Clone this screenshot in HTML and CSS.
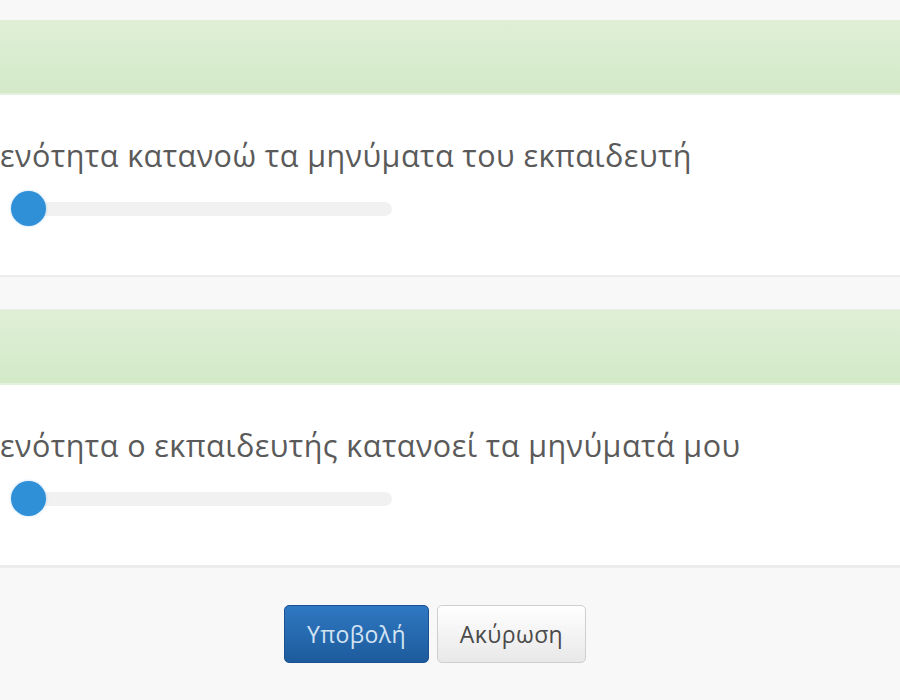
FILE: index.html
```html
<!DOCTYPE html>
<html lang="el">
<head>
<meta charset="utf-8">
<title>Αξιολόγηση</title>
<link rel="stylesheet" href="styles.css">
</head>
<body>
<div class="page">
  <section class="panel">
    <div class="panel-heading"></div>
    <div class="panel-body">
      <p class="question">ενότητα κατανοώ τα μηνύματα του εκπαιδευτή</p>
      <div class="slider">
        <div class="track"></div>
        <div class="thumb"></div>
      </div>
    </div>
  </section>
  <section class="panel panel-second">
    <div class="panel-heading"></div>
    <div class="panel-body">
      <p class="question">ενότητα ο εκπαιδευτής κατανοεί τα μηνύματά μου</p>
      <div class="slider">
        <div class="track"></div>
        <div class="thumb"></div>
      </div>
    </div>
  </section>
  <div class="form-actions">
    <button class="btn btn-primary" type="submit">Υποβολή</button>
    <button class="btn btn-default" type="button">Ακύρωση</button>
  </div>
</div>
</body>
</html>
```

FILE: styles.css
```css
html, body {
  margin: 0;
  padding: 0;
}
body {
  background: #f8f8f8;
  font-family: "Open Sans", "Noto Sans", "DejaVu Sans", sans-serif;
  color: #5a5a5a;
  width: 900px;
  height: 700px;
  overflow: hidden;
}
.page {
  padding-top: 20px;
}
.panel {
  background: #fff;
  border-bottom: 2px solid #ececec;
}
.panel-second {
  margin-top: 32px;
  border-top: 1px solid #ececec;
}
.panel-heading {
  height: 73px;
  background: linear-gradient(to bottom, #dfefd6 0%, #d3e9c8 100%);
  border-bottom: 2px solid #e4f1dd;
}
.panel-body {
  padding: 40px 0 48px 0;
}
.question {
  margin: 0;
  font-size: 30.5px;
  line-height: 40px;
  letter-spacing: 0.45px;
  color: #5a5a5a;
}
.slider {
  position: relative;
  height: 36px;
  margin-top: 16px;
  width: 392px;
}
.track {
  position: absolute;
  left: 30px;
  right: 0;
  top: 11px;
  height: 14px;
  border-radius: 7px;
  background: #f1f1f1;
}
.thumb {
  position: absolute;
  left: 11px;
  top: 0;
  width: 35px;
  height: 35px;
  border-radius: 50%;
  background: #2f90d8;
  box-shadow: 0 0 3px rgba(46, 143, 216, 0.35);
}
.form-actions {
  border-top: 1px solid #ececec;
  height: 135px;
  display: flex;
  justify-content: center;
  align-items: flex-start;
  gap: 8px;
  padding-top: 37px;
  padding-right: 30px;
  box-sizing: border-box;
}
.btn {
  font-family: "Open Sans", "Noto Sans", "DejaVu Sans", sans-serif;
  font-size: 23px;
  letter-spacing: 0.4px;
  height: 58px;
  border-radius: 5px;
  padding: 0;
  cursor: pointer;
}
.btn-primary {
  width: 145px;
  color: #d4e3f3;
  background: linear-gradient(to bottom, #2f78c2 0%, #1d5b9c 100%);
  border: 1px solid #1a5190;
}
.btn-default {
  width: 149px;
  color: #4a4a4a;
  background: linear-gradient(to bottom, #ffffff 0%, #e8e8e8 100%);
  border: 1px solid #cfcfcf;
}
```
